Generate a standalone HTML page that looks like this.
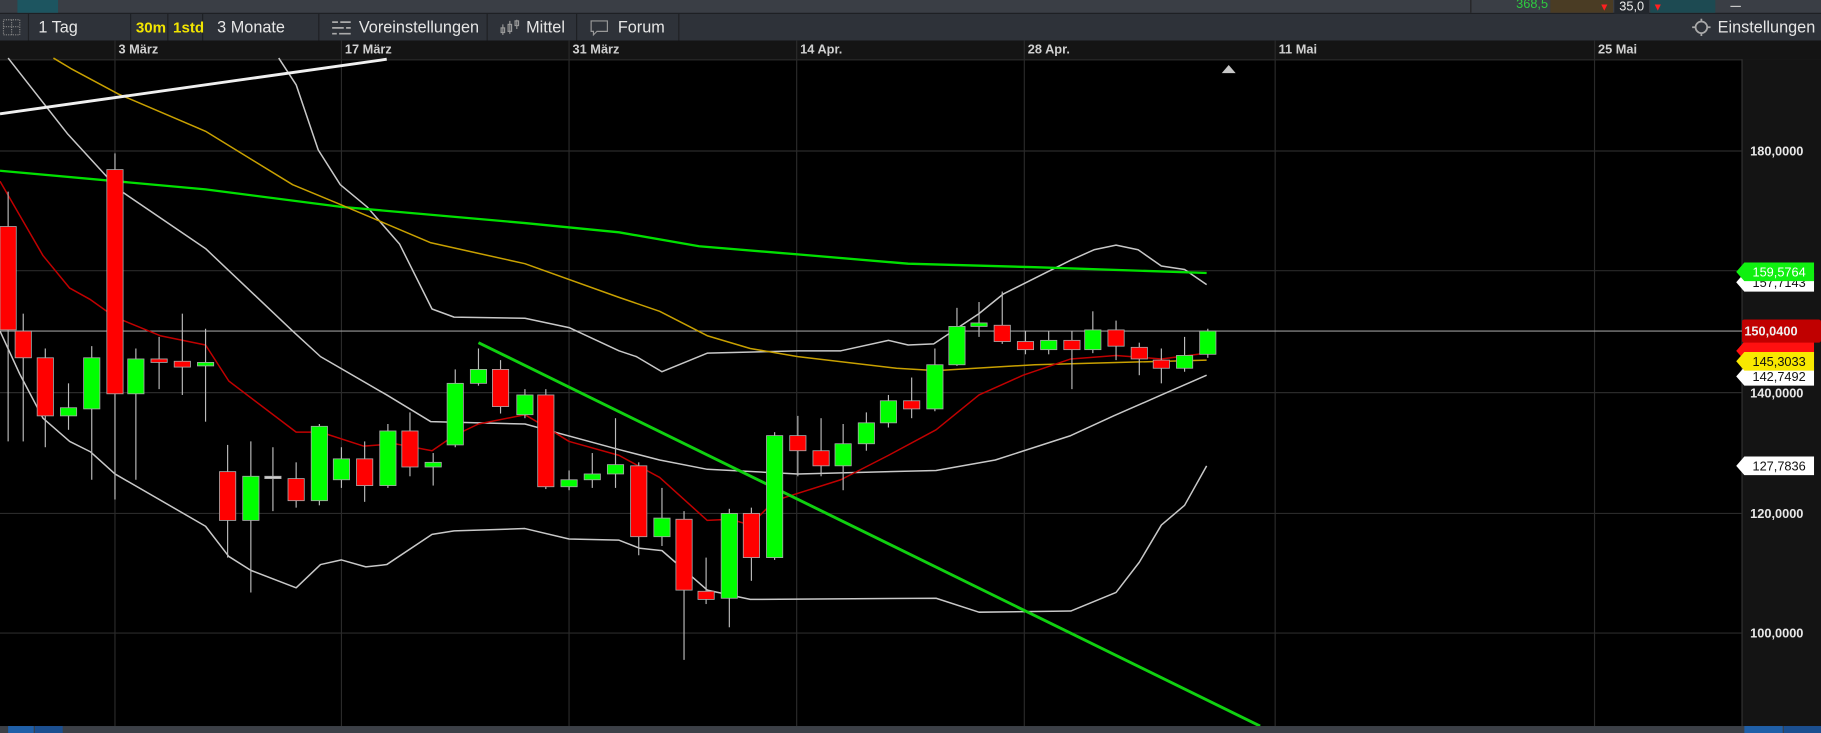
<!DOCTYPE html>
<html><head><meta charset="utf-8">
<style>
html,body{margin:0;padding:0;background:#000;overflow:hidden;width:1821px;height:733px}
#w{position:absolute;left:0;top:0;width:1568px;height:631px;transform-origin:0 0;transform:scale(1.16135,1.16165);font-family:"Liberation Sans",sans-serif}
.top{position:absolute;left:0;top:0;width:1568px;height:11px;background:#3a3e45;border-bottom:1px solid #1c1e22}
.tb{position:absolute;left:0;top:12px;width:1568px;height:23px;background:#2e3239}
.b{position:absolute;top:0;height:23px;line-height:23px;color:#e6e6e6;font-size:14px;border-right:1px solid #1e2024;box-sizing:border-box;padding-left:8px}
.y{color:#f2e500;font-weight:bold;font-size:13px;padding-left:4px}
.ax{position:absolute;left:0;top:35px;width:1568px;height:16px;background:#141414;border-bottom:1px solid #2a2a2a}
.ax span{position:absolute;top:2px;font-size:11px;font-weight:bold;color:#d0d0d0}
.bot{position:absolute;left:0;top:625px;width:1568px;height:6px;background:#3c4047}
</style></head><body><div id="w">
<div class="top">
 <div style="position:absolute;left:15px;top:0;width:35px;height:11px;background:#1d5560"></div>
 <div style="position:absolute;left:1266px;top:0;width:69px;height:11px;background:#3a3e45;border-left:1px solid #222;color:#2ecc40;font-size:11px;line-height:9px;text-align:right;padding-right:2px;box-sizing:border-box">368,5</div>
 <div style="position:absolute;left:1335px;top:0;width:54px;height:11px;background:#4a3c24"></div>
 <div style="position:absolute;left:1377px;top:1px;color:#ff2020;font-size:9px">▼</div>
 <div style="position:absolute;left:1390px;top:0;width:30px;height:12px;background:#23272d;color:#eee;font-size:11px;line-height:12px;text-align:center">35,0</div>
 <div style="position:absolute;left:1421px;top:0;width:56px;height:11px;background:#1d4a52"></div>
 <div style="position:absolute;left:1423px;top:1px;color:#ff2020;font-size:9px">▼</div>
 <div style="position:absolute;left:1490px;top:5px;width:9px;height:1px;background:#ccc"></div>
</div>
<div class="tb">
 <div class="b" style="left:0;width:25px;padding:0"><svg width="25" height="23"><rect x="3" y="5" width="14" height="13" fill="none" stroke="#888" stroke-dasharray="1,1"/><line x1="10" y1="5" x2="10" y2="18" stroke="#888" stroke-dasharray="1,1"/><line x1="3" y1="11" x2="17" y2="11" stroke="#888" stroke-dasharray="1,1"/></svg></div>
 <div class="b" style="left:25px;width:88px">1 Tag</div>
 <div class="b y" style="left:113px;width:32px">30m</div>
 <div class="b y" style="left:145px;width:30px">1std</div>
 <div class="b" style="left:175px;width:100px;padding-left:12px">3 Monate</div>
 <div class="b" style="left:275px;width:145px;padding-left:34px">Voreinstellungen<svg style="position:absolute;left:10px;top:5px" width="18" height="14"><g stroke="#aaa" stroke-width="1.5"><line x1="1" y1="2" x2="17" y2="2"/><line x1="1" y1="7" x2="17" y2="7"/><line x1="1" y1="12" x2="17" y2="12"/></g><g fill="#2e3239"><rect x="6" y="0" width="2" height="4"/><rect x="11" y="5" width="2" height="4"/><rect x="5" y="10" width="2" height="4"/></g></svg></div>
 <div class="b" style="left:420px;width:77px;padding-left:33px">Mittel<svg style="position:absolute;left:10px;top:4px" width="18" height="15"><g stroke="#999" fill="none"><line x1="3" y1="5" x2="3" y2="14"/><rect x="1.5" y="8" width="3" height="4"/><line x1="9" y1="2" x2="9" y2="13"/><rect x="7.5" y="5" width="3" height="6"/><line x1="15" y1="1" x2="15" y2="9"/><rect x="13.5" y="2" width="3" height="4"/></g></svg></div>
 <div class="b" style="left:497px;width:88px;padding-left:35px">Forum<svg style="position:absolute;left:11px;top:5px" width="16" height="14"><path d="M1 1H15V10H6L3 13V10H1Z" fill="none" stroke="#999"/></svg></div>
 <div class="b" style="left:1445px;width:123px;border:none;padding-left:34px">Einstellungen<svg style="position:absolute;left:12px;top:4px" width="16" height="15"><circle cx="8" cy="7.5" r="5" fill="none" stroke="#aaa" stroke-width="1.5"/><g stroke="#aaa" stroke-width="1.5"><line x1="8" y1="0" x2="8" y2="3"/><line x1="8" y1="12" x2="8" y2="15"/><line x1="0" y1="7.5" x2="3" y2="7.5"/><line x1="13" y1="7.5" x2="16" y2="7.5"/></g></svg></div>
</div>
<div class="ax">
 <span style="left:102px">3 März</span><span style="left:297px">17 März</span><span style="left:493px">31 März</span><span style="left:689px">14 Apr.</span><span style="left:885px">28 Apr.</span><span style="left:1101px">11 Mai</span><span style="left:1376px">25 Mai</span>
</div>
<svg style="position:absolute;left:0;top:0" width="1568" height="631" viewBox="0 0 1568 631" id="ch">
 <rect x="1500" y="51" width="68" height="574" fill="#141414"/>
 <line x1="1500" y1="51" x2="1500" y2="625" stroke="#333"/>
 <g stroke="#2a2a2a" stroke-width="1">
  <line x1="0" y1="130" x2="1500" y2="130"/><line x1="0" y1="233" x2="1500" y2="233"/><line x1="0" y1="338" x2="1500" y2="338"/><line x1="0" y1="442" x2="1500" y2="442"/><line x1="0" y1="545" x2="1500" y2="545"/>
  <line x1="99" y1="35" x2="99" y2="625"/><line x1="294" y1="35" x2="294" y2="625"/><line x1="490" y1="35" x2="490" y2="625"/><line x1="686" y1="35" x2="686" y2="625"/><line x1="882" y1="35" x2="882" y2="625"/><line x1="1098" y1="35" x2="1098" y2="625"/><line x1="1373" y1="35" x2="1373" y2="625"/>
 </g>
 <line x1="0" y1="285" x2="1500" y2="285" stroke="#9a9a9a"/>
 <polygon points="1052,63 1058,56 1064,63" fill="#c8c8c8"/>
 <g fill="none" stroke-linejoin="round">
  <polyline stroke="#c8c8c8" stroke-width="1.3" points="7,50 58,115 102,163 177,214 252,285 276,307 333,340 371,363 452,365 533,387 568,396 609,404 687,408 806,405 857,396 922,375 959,358 1000,340 1039,323"/>
  <polyline stroke="#c8c8c8" stroke-width="1.3" points="240,50 255,73 274,129 293,159 316,178 344,210 372,266 391,273 452,274 490,282 533,302 548,307 570,320 609,304 687,302 724,302 765,293 782,297 804,296 843,270 864,253 922,224 942,215 961,211 980,215 1000,229 1020,232 1039,245"/>
  <polyline stroke="#c8c8c8" stroke-width="1.3" points="0,285 17,322 37,360 60,380 78,389 99,408 177,453 197,479 216,491 255,506 276,486 294,482 315,488 333,486 372,460 391,457 452,455 490,464 533,465 551,472 570,474 609,508 646,516 806,515 843,527 922,526 961,510 981,484 1000,452 1020,435 1039,401"/>
  <polyline stroke="#00e000" stroke-width="2" points="0,147 177,163 293,178 452,192 533,200 602,212 687,219 782,227 891,230 1039,235"/>
  <polyline stroke="#c8a000" stroke-width="1.3" points="46,50 61,59 102,81 177,113 252,159 293,176 371,209 452,227 533,256 568,268 609,289 646,300 687,307 772,317 806,319 891,314 1039,310"/>
  <polyline stroke="#c00000" stroke-width="1.3" points="0,156 37,220 60,248 78,258 99,273 138,289 177,297 197,328 255,372 276,372 313,384 340,382 372,388 391,375 412,365 452,357 469,367 490,380 533,392 568,411 609,448 629,447 646,452 667,431 724,413 765,392 806,370 843,340 881,323 922,309 961,306 1000,309 1039,304"/>
 </g>
 <line x1="0" y1="98" x2="333" y2="51" stroke="#f0f0f0" stroke-width="2.5"/>
 <line x1="412" y1="295" x2="1085" y2="625" stroke="#10d010" stroke-width="2.5"/>
 <g id="cd"></g>
 <g font-size="11" fill="#e8e8e8" font-weight="bold">
  <text x="1507" y="134">180,0000</text><text x="1507" y="342">140,0000</text><text x="1507" y="446">120,0000</text><text x="1507" y="549">100,0000</text>
 </g>
 <g font-size="11">
  <polygon points="1495,243 1502,235 1562,235 1562,251 1502,251" fill="#fff"/><text x="1509" y="247" fill="#111">157,7143</text>
  <polygon points="1495,234 1502,226 1562,226 1562,242 1502,242" fill="#10f010"/><text x="1509" y="238" fill="#fff">159,5764</text>
  <polygon points="1495,324 1502,316 1562,316 1562,332 1502,332" fill="#fff"/><text x="1509" y="328" fill="#111">142,7492</text>
  <polygon points="1495,302 1502,294 1562,294 1562,310 1502,310" fill="#ff1010"/>
  <polygon points="1495,311 1502,303 1562,303 1562,319 1502,319" fill="#f8e800"/><text x="1509" y="315" fill="#111">145,3033</text>
  <rect x="1500" y="275" width="68" height="20" rx="2" fill="#c00000"/><text x="1502" y="289" fill="#f0f0f0" font-weight="bold">150,0400</text>
  <polygon points="1495,401 1502,393 1562,393 1562,409 1502,409" fill="#fff"/><text x="1509" y="405" fill="#111">127,7836</text>
 </g>
</svg>
<div class="bot">
 <div style="position:absolute;left:7px;top:0;width:22px;height:6px;background:#1f5fa8"></div>
 <div style="position:absolute;left:30px;top:0;width:24px;height:6px;background:#1b4f90"></div>
 <div style="position:absolute;left:1502px;top:0;width:33px;height:6px;background:#1f5fa8"></div>
 <div style="position:absolute;left:1536px;top:0;width:32px;height:6px;background:#1b4f90"></div>
</div>
</div>
<script>
var C=[[0,195,284,'r',165,380],[13,285,308,'r',270,380],[32,308,358,'r',300,385],[52,351,358,'g',330,370],[72,308,352,'g',298,413],[92,146,339,'r',132,430],[110,309,339,'g',300,413],[130,309,312,'r',290,335],[150,311,316,'r',270,340],[170,312,315,'g',283,363],[189,406,448,'r',383,480],[209,410,448,'g',380,510],[228,410,412,'w',385,440],[248,412,431,'r',398,437],[268,367,431,'g',365,435],[287,395,413,'g',385,420],[307,395,418,'r',380,432],[327,371,418,'g',365,420],[346,371,402,'r',355,410],[366,398,402,'g',390,418],[385,330,383,'g',318,385],[405,318,330,'g',300,332],[424,318,350,'r',310,356],[445,340,357,'g',335,360],[463,340,419,'r',335,421],[483,413,419,'g',405,422],[503,408,413,'g',390,420],[523,400,408,'g',360,420],[543,401,462,'r',398,478],[563,446,462,'g',420,470],[582,447,508,'r',440,568],[601,509,516,'r',480,520],[621,442,515,'g',438,540],[640,442,480,'r',437,500],[660,375,480,'g',372,482],[680,375,388,'r',358,410],[700,388,401,'r',360,410],[719,382,401,'g',365,422],[739,364,382,'g',355,388],[758,345,364,'g',340,368],[778,345,352,'r',325,360],[798,314,352,'g',300,354],[817,281,314,'g',265,315],[836,278,281,'g',260,290],[856,280,294,'r',251,296],[876,294,301,'r',285,305],[896,293,301,'g',285,305],[916,293,301,'r',285,335],[934,284,301,'g',268,304],[954,284,298,'r',276,310],[974,299,309,'r',295,323],[993,310,317,'r',300,330],[1013,306,317,'g',290,320],[1033,285,305,'g',283,308]];
var s='';C.forEach(function(c){var x=c[0],cx=x+7;var f=c[3]=='r'?'#ff0000':c[3]=='g'?'#00ff00':'#cccccc';
s+='<line x1="'+cx+'" y1="'+c[4]+'" x2="'+cx+'" y2="'+c[5]+'" stroke="#bbb" stroke-width="1"/>';
s+='<rect x="'+x+'" y="'+c[1]+'" width="14" height="'+Math.max(2,c[2]-c[1])+'" fill="'+f+'" stroke="#aaa" stroke-width="0.7"/>';});
document.getElementById('cd').innerHTML=s;
</script>
</body></html>
